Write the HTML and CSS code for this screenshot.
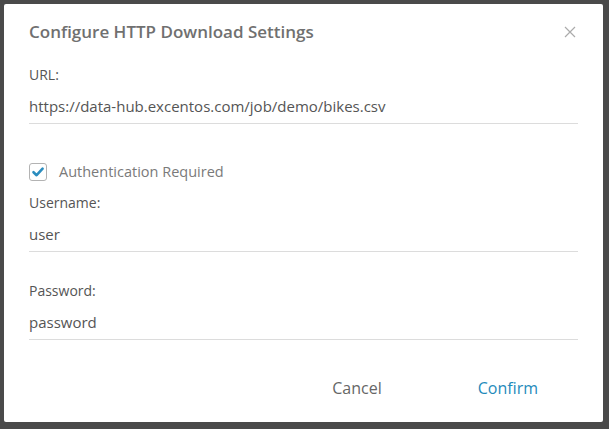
FILE: index.html
```html
<!DOCTYPE html>
<html>
<head>
<meta charset="utf-8">
<link rel="stylesheet" href="styles.css">
</head>
<body>
<div class="dialog">
  <div class="header">
    <div class="title">Configure HTTP Download Settings</div>
    <button class="close" aria-label="Close">
      <svg width="16" height="16" viewBox="0 0 16 16"><path d="M3 3 L13 13 M13 3 L3 13" stroke="#ababab" stroke-width="1.2" fill="none"/></svg>
    </button>
  </div>
  <div class="field first">
    <div class="label">URL:</div>
    <div class="input">https://data-hub.excentos.com/job/demo/bikes.csv</div>
  </div>
  <div class="check-row">
    <span class="checkbox">
      <svg width="14" height="14" viewBox="0 0 14 14"><path d="M2.5 7.2 L5.6 10.2 L11.6 3.6" stroke="#2b8dbf" stroke-width="2.6" fill="none" stroke-linecap="round" stroke-linejoin="round"/></svg>
    </span>
    <span class="check-label">Authentication Required</span>
  </div>
  <div class="field after-check">
    <div class="label">Username:</div>
    <div class="input">user</div>
  </div>
  <div class="field">
    <div class="label">Password:</div>
    <div class="input">password</div>
  </div>
  <div class="footer">
    <button class="btn cancel">Cancel</button>
    <button class="btn confirm">Confirm</button>
  </div>
</div>
</body>
</html>
```
FILE: styles.css
```css
html, body {
  margin: 0;
  padding: 0;
}
body {
  background: #4a4a4a;
  width: 609px;
  height: 429px;
  overflow: hidden;
  font-family: "Open Sans", "Liberation Sans", sans-serif;
}
.dialog {
  margin: 4px 0 0 4px;
  width: 599px;
  height: 418px;
  box-sizing: border-box;
  background: #fff;
  border-radius: 2px;
  padding: 17px 25px 0 25px;
}
.header {
  display: flex;
  justify-content: space-between;
  align-items: center;
  height: 22px;
}
.title {
  font-size: 17px;
  font-weight: 600;
  line-height: 22px;
  color: #707070;
}
.close {
  width: 16px;
  height: 16px;
  padding: 0;
  border: 0;
  background: none;
  display: flex;
}
.field {
  margin-top: 29px;
}
.field.first {
  margin-top: 22px;
}
.field.after-check {
  margin-top: 10px;
}
.label {
  font-size: 14px;
  line-height: 20px;
  color: #555;
}
.input {
  margin-top: 10px;
  font-size: 15px;
  line-height: 22px;
  color: #555;
  padding-bottom: 6px;
  border-bottom: 1px solid #dcdcdc;
}
.check-row {
  margin-top: 37px;
  display: flex;
  align-items: center;
  height: 22px;
}
.checkbox {
  width: 18px;
  height: 18px;
  box-sizing: border-box;
  border: 1.5px solid #b3b3b3;
  border-radius: 3px;
  display: flex;
  align-items: center;
  justify-content: center;
}
.check-label {
  margin-left: 12px;
  font-size: 14.5px;
  line-height: 22px;
  color: #7a7a7a;
}
.footer {
  margin-top: 37px;
  margin-right: 20px;
  display: flex;
  justify-content: flex-end;
  gap: 56px;
}
.btn {
  font-family: "Open Sans", "Liberation Sans", sans-serif;
  font-size: 16px;
  line-height: 22px;
  padding: 0 20px;
  border: 0;
  background: none;
}
.cancel {
  color: #666;
}
.confirm {
  color: #1f8bbb;
}
```
